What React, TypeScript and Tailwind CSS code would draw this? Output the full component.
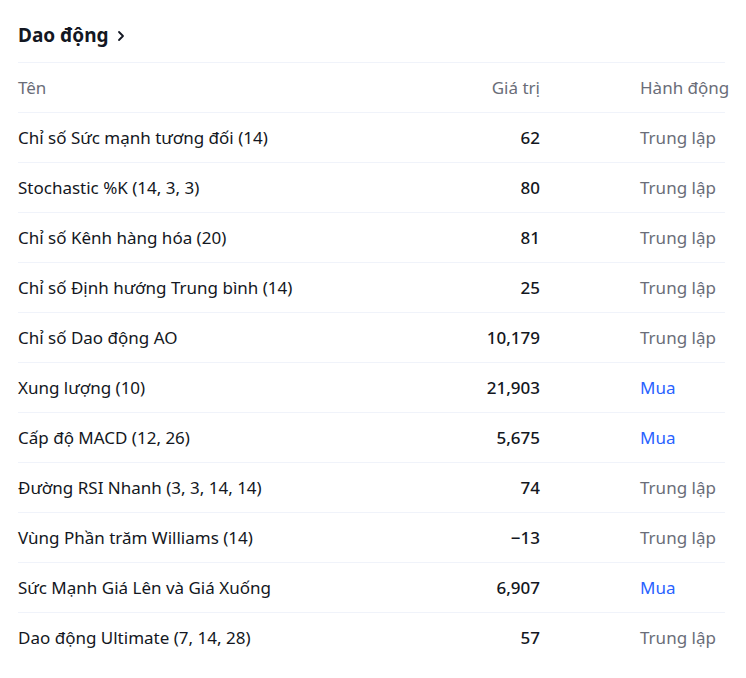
const rows = [
  { name: "Chỉ số Sức mạnh tương đối (14)", value: "62", action: "Trung lập" },
  { name: "Stochastic %K (14, 3, 3)", value: "80", action: "Trung lập" },
  { name: "Chỉ số Kênh hàng hóa (20)", value: "81", action: "Trung lập" },
  { name: "Chỉ số Định hướng Trung bình (14)", value: "25", action: "Trung lập" },
  { name: "Chỉ số Dao động AO", value: "10,179", action: "Trung lập" },
  { name: "Xung lượng (10)", value: "21,903", action: "Mua" },
  { name: "Cấp độ MACD (12, 26)", value: "5,675", action: "Mua" },
  { name: "Đường RSI Nhanh (3, 3, 14, 14)", value: "74", action: "Trung lập" },
  { name: "Vùng Phần trăm Williams (14)", value: "−13", action: "Trung lập" },
  { name: "Sức Mạnh Giá Lên và Giá Xuống", value: "6,907", action: "Mua" },
  { name: "Dao động Ultimate (7, 14, 28)", value: "57", action: "Trung lập" },
];

const App = () => {
  return (
    <div className="w-[746px] h-[678px] bg-white pl-[18px] pr-[21px] font-['Noto_Sans',sans-serif] text-[#131722]">
      {/* tiêu đề */}
      <div className="flex items-center h-[62px] pt-[8px] gap-[6px]">
        <span className="text-[19px] font-bold">Dao động</span>
        <svg width="12" height="14" viewBox="0 0 12 14" fill="none" className="mt-[1px]">
          <path d="M4 3l4 4-4 4" stroke="#131722" strokeWidth="1.8" strokeLinecap="round" strokeLinejoin="round" />
        </svg>
      </div>

      {/* bảng */}
      <div className="flex flex-col">
        <div className="flex items-center h-[50px] border-t border-[#f0f3fa] text-[17px] text-[#6a6d78]">
          <div className="flex-1">Tên</div>
          <div className="w-[140px] text-right">Giá trị</div>
          <div className="w-[185px] pl-[100px] whitespace-nowrap">Hành động</div>
        </div>
        {rows.map((r) => (
          <div
            key={r.name}
            className="flex items-center h-[50px] border-t border-[#f0f3fa] text-[17px]"
          >
            <div className="flex-1">{r.name}</div>
            <div className="w-[140px] text-right font-medium">{r.value}</div>
            <div
              className={
                r.action === "Mua"
                  ? "w-[185px] pl-[100px] text-[#2962ff]"
                  : "w-[185px] pl-[100px] text-[#6a6d78]"
              }
            >
              {r.action}
            </div>
          </div>
        ))}
      </div>
    </div>
  );
};

export default App;
